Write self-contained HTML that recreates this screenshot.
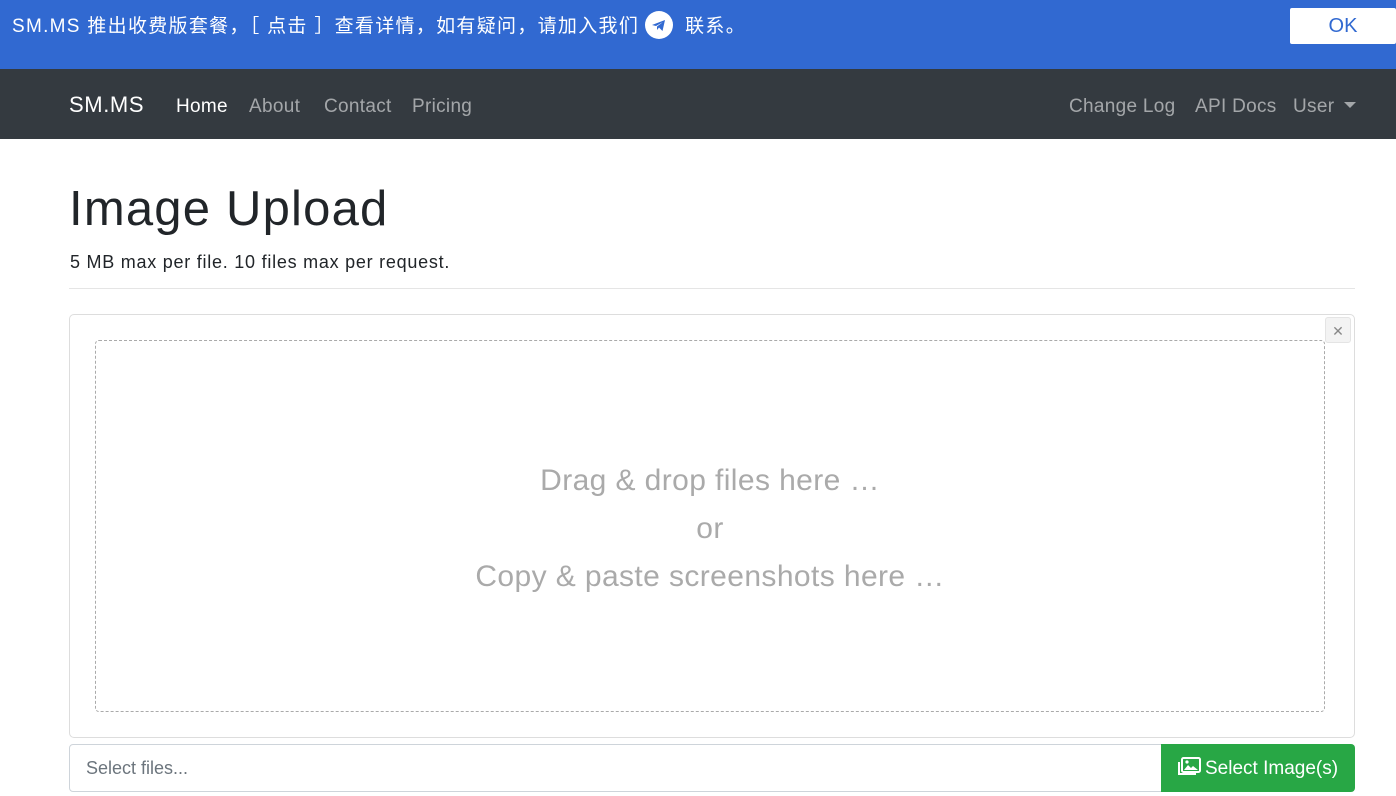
<!DOCTYPE html>
<html><head><meta charset="utf-8"><style>
*{box-sizing:border-box;margin:0;padding:0}
body{width:1396px;height:796px;overflow:hidden;font-family:"Liberation Sans","Noto Sans CJK SC",sans-serif;background:#fff;color:#212529}
.banner{position:absolute;left:0;top:0;width:1396px;height:69px;background:#3169d1;color:#fff;font-size:19px}
.banner .t{position:absolute;left:12px;top:13px;line-height:26px;white-space:nowrap;letter-spacing:1.3px}
.tg{display:inline-block;width:28px;height:28px;border-radius:50%;background:#fff;vertical-align:middle;margin:0 12px 0 6px;position:relative;top:-2px}
.ok{position:absolute;left:1290px;top:8px;width:106px;height:36px;background:#fff;color:#3169d1;font-size:20px;text-align:center;line-height:36px;border-radius:2px}
.nav{position:absolute;top:69px;left:0;width:1396px;height:70px;background:#343a40}
.nav span{position:absolute;top:24px;font-size:19px;color:rgba(255,255,255,.55);line-height:24px;letter-spacing:.3px}
.caret{display:inline-block;width:0;height:0;border-left:6px solid transparent;border-right:6px solid transparent;border-top:6px solid rgba(255,255,255,.55);vertical-align:4px;margin-left:10px}
h1{position:absolute;left:69px;top:180px;font-size:49px;font-weight:500;line-height:58px;letter-spacing:1.2px}
.sub{position:absolute;left:70px;top:252px;font-size:18px;letter-spacing:.75px}
.hr{position:absolute;left:69px;top:288px;width:1286px;border-top:1px solid #e5e5e5}
.box{position:absolute;left:69px;top:314px;width:1286px;height:424px;border:1px solid #ddd;border-radius:5px}
.dz{position:absolute;left:95px;top:340px;width:1230px;height:372px;border:1px dashed #aaa;border-radius:4px;text-align:center;color:#aaa;font-size:30px;line-height:48px;padding-top:116px;letter-spacing:.4px}
.x{position:absolute;left:1325px;top:317px;width:26px;height:26px;background:#f3f3f3;border:1px solid #e4e4e4;border-radius:3px;color:#888;text-align:center;line-height:26px;font-size:14px}
.inp{position:absolute;left:69px;top:744px;width:1093px;height:48px;border:1px solid #ced4da;border-radius:4px 0 0 4px;color:#6c757d;font-size:18px;padding:13px 16px}
.btn{position:absolute;left:1161px;top:744px;width:194px;height:48px;background:#28a745;border-radius:0 4px 4px 0;color:#fff;font-size:19px;line-height:50px;padding-left:16px}
</style></head><body>
<div class="banner"><div class="t">SM.MS 推出收费版套餐，［ 点击 ］查看详情，如有疑问，请加入我们<span class="tg"><svg width="28" height="28" viewBox="0 0 28 28"><path d="M7 14 L20 9 L17.5 20 L14 16.5 L12 19 L12 15.5 L18 11 L11 15 Z" fill="#3169d1"/></svg></span>联系。</div><div class="ok">OK</div></div>
<div class="nav">
<span style="left:69px;color:#fff;font-size:22px;top:24px;letter-spacing:.6px">SM.MS</span>
<span style="left:176px;color:#fff;top:26px">Home</span>
<span style="left:249px;top:26px">About</span>
<span style="left:324px;top:26px">Contact</span>
<span style="left:412px;top:26px">Pricing</span>
<span style="left:1069px;top:26px">Change Log</span>
<span style="left:1195px;top:26px">API Docs</span>
<span style="left:1293px;top:26px">User<i class="caret"></i></span>
</div>
<h1>Image Upload</h1>
<div class="sub">5 MB max per file. 10 files max per request.</div>
<div class="hr"></div>
<div class="box"></div>
<div class="x">✕</div>
<div class="dz">Drag &amp; drop files here …<br>or<br>Copy &amp; paste screenshots here …</div>
<div class="inp">Select files...</div>
<div class="btn"><svg width="24" height="20" viewBox="0 0 24 20" style="vertical-align:-3px;margin-right:4px"><rect x="5" y="1" width="18" height="14" rx="1.5" fill="none" stroke="#fff" stroke-width="2"/><path d="M2 5v12h17" fill="none" stroke="#fff" stroke-width="2"/><path d="M7 13l4-5 3 3 2-2 5 4z" fill="#fff"/><circle cx="10" cy="5" r="1.6" fill="#fff"/></svg>Select Image(s)</div>
</body></html>
